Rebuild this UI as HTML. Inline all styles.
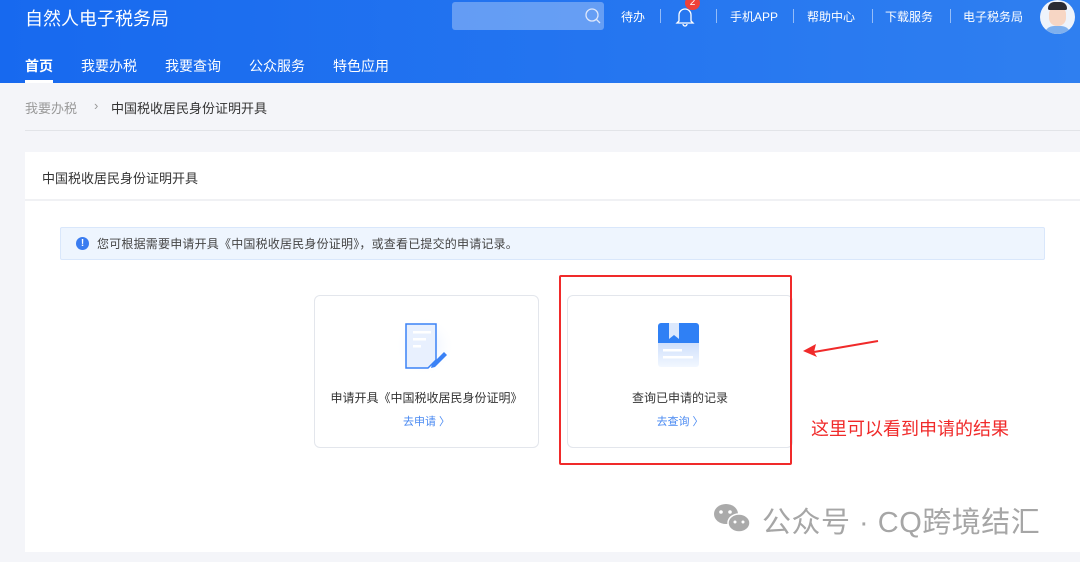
<!DOCTYPE html>
<html><head><meta charset="utf-8"><style>
*{margin:0;padding:0;box-sizing:border-box}
body{width:1080px;height:562px;overflow:hidden;background:#f4f5f9;font-family:"Liberation Sans","Noto Sans CJK SC",sans-serif;position:relative}
.abs{position:absolute}
.hdr{left:0;top:0;width:1080px;height:83px;background:linear-gradient(90deg,#1769ef,#2f7ff0)}
.t{color:#fff;white-space:nowrap}
.sep{width:1px;height:14px;background:rgba(255,255,255,.5);top:9px}
.card{background:#fff;border:1px solid #e3e6ec;border-radius:6px}
</style></head><body>
<div class="abs hdr"></div>
<div class="abs t" style="left:25px;top:5px;font-size:18px">自然人电子税务局</div>
<div class="abs" style="left:452px;top:2px;width:152px;height:28px;background:rgba(255,255,255,.3);border-radius:3px"></div>
<svg class="abs" style="left:584px;top:7px" width="18" height="18" viewBox="0 0 18 18"><circle cx="8" cy="8" r="6" fill="none" stroke="#dfe8fb" stroke-width="1.3"/><line x1="12.5" y1="12.5" x2="16" y2="16" stroke="#dfe8fb" stroke-width="1.3"/></svg>
<div class="abs t" style="left:621px;top:8px;font-size:12px">待办</div>
<div class="abs sep" style="left:660px"></div>
<svg class="abs" style="left:675px;top:5px" width="20" height="22" viewBox="0 0 20 22"><path d="M4 16V10a6 6 0 0 1 12 0v6l2 2H2z M8 19a2 2 0 0 0 4 0" fill="none" stroke="#fff" stroke-width="1.3"/></svg>
<div class="abs" style="left:685px;top:-4px;width:15px;height:14px;border-radius:7px;background:#f0413a;color:#fff;font-size:10px;text-align:center;line-height:14px">2</div>
<div class="abs sep" style="left:716px"></div>
<div class="abs t" style="left:730px;top:8px;font-size:12px">手机APP</div>
<div class="abs sep" style="left:793px"></div>
<div class="abs t" style="left:807px;top:8px;font-size:12px">帮助中心</div>
<div class="abs sep" style="left:872px"></div>
<div class="abs t" style="left:885px;top:8px;font-size:12px">下载服务</div>
<div class="abs sep" style="left:950px"></div>
<div class="abs t" style="left:963px;top:8px;font-size:12px">电子税务局</div>
<div class="abs" style="left:1040px;top:0;width:35px;height:34px;border-radius:50%;background:#eef3fb;overflow:hidden"><div style="position:absolute;left:9px;top:6px;width:17px;height:20px;border-radius:8px;background:#f7d6c4"></div><div style="position:absolute;left:8px;top:2px;width:19px;height:8px;border-radius:8px 8px 2px 2px;background:#2b2b33"></div><div style="position:absolute;left:4px;top:26px;width:27px;height:12px;border-radius:10px 10px 0 0;background:#7fb0ee"></div></div>
<div class="abs t" style="left:25px;top:56px;font-size:14px;font-weight:bold">首页</div>
<div class="abs" style="left:25px;top:80px;width:28px;height:3px;background:#fff"></div>
<div class="abs t" style="left:81px;top:56px;font-size:14px">我要办税</div>
<div class="abs t" style="left:165px;top:56px;font-size:14px">我要查询</div>
<div class="abs t" style="left:249px;top:56px;font-size:14px">公众服务</div>
<div class="abs t" style="left:333px;top:56px;font-size:14px">特色应用</div>
<div class="abs" style="left:25px;top:98px;font-size:13px;color:#999">我要办税</div>
<div class="abs" style="left:94px;top:98px;font-size:13px;color:#999">›</div>
<div class="abs" style="left:111px;top:98px;font-size:13px;color:#333">中国税收居民身份证明开具</div>
<div class="abs" style="left:25px;top:130px;width:1055px;height:1px;background:#e2e4e8"></div>
<div class="abs" style="left:25px;top:152px;width:1055px;height:400px;background:#fff"></div>
<div class="abs" style="left:25px;top:199px;width:1055px;height:2px;background:#f0f1f4"></div>
<div class="abs" style="left:42px;top:168px;font-size:13px;color:#333">中国税收居民身份证明开具</div>
<div class="abs" style="left:60px;top:227px;width:985px;height:33px;background:#eef5fe;border:1px solid #d9e7fb;border-radius:2px"></div>
<div class="abs" style="left:76px;top:237px;width:13px;height:13px;border-radius:50%;background:#3a7cf0;color:#fff;font-size:10px;font-weight:bold;text-align:center;line-height:13px">!</div>
<div class="abs" style="left:97px;top:235px;font-size:12px;color:#444;white-space:nowrap;letter-spacing:0.2px">您可根据需要申请开具《中国税收居民身份证明》，或查看已提交的申请记录。</div>
<div class="abs card" style="left:314px;top:295px;width:225px;height:153px"></div>
<div class="abs card" style="left:567px;top:295px;width:226px;height:153px"></div>
<svg class="abs" style="left:395px;top:316px" width="60" height="60" viewBox="0 0 60 60"><defs><radialGradient id="g" cx=".5" cy=".5" r=".5"><stop offset="0" stop-color="#dfeafe"/><stop offset="1" stop-color="#fff" stop-opacity="0"/></radialGradient></defs><circle cx="30" cy="30" r="30" fill="url(#g)"/><path d="M11 8h30v36l-8 8H11z" fill="#e8f0fe" stroke="#3b82f6" stroke-width="1.5"/><rect x="18" y="15" width="18" height="2.5" fill="#fff"/><rect x="18" y="22" width="13" height="2.5" fill="#fff"/><rect x="18" y="29" width="8" height="2.5" fill="#fff"/><path d="M37 48l12-12 3 3-12 12-4 1z" fill="#3b82f6"/></svg>
<svg class="abs" style="left:657px;top:322px" width="44" height="46" viewBox="0 0 44 46"><defs><linearGradient id="b" x1="0" y1="0" x2="0" y2="1"><stop offset=".45" stop-color="#2f80f5"/><stop offset=".46" stop-color="#cfe0fc"/><stop offset="1" stop-color="#f2f7ff"/></linearGradient></defs><rect x="1" y="1" width="41" height="44" rx="3" fill="url(#b)"/><path d="M12 1h10v16l-5-4-5 4z" fill="#dbe8fd"/><rect x="6" y="27" width="19" height="2.5" fill="#fff"/><rect x="6" y="34" width="30" height="2.5" fill="#fff"/></svg>
<div class="abs" style="left:314px;top:389px;width:225px;text-align:center;font-size:12px;color:#333;white-space:nowrap">申请开具《中国税收居民身份证明》</div>
<div class="abs" style="left:314px;top:413px;width:225px;text-align:center;font-size:11px;color:#4a8af2">去申请 〉</div>
<div class="abs" style="left:567px;top:389px;width:226px;text-align:center;font-size:12px;color:#333">查询已申请的记录</div>
<div class="abs" style="left:567px;top:413px;width:226px;text-align:center;font-size:11px;color:#4a8af2">去查询 〉</div>
<div class="abs" style="left:559px;top:275px;width:233px;height:190px;border:2px solid #f02a2a;border-radius:2px"></div>
<svg class="abs" style="left:800px;top:338px" width="80" height="22" viewBox="0 0 80 22"><path d="M78 3L14 14" stroke="#f02a2a" stroke-width="2"/><path d="M3 13l13-7-2 8 3 5z" fill="#f02a2a"/></svg>
<div class="abs" style="left:811px;top:415px;font-size:18px;color:#f02a2a;white-space:nowrap">这里可以看到申请的结果</div>
<svg class="abs" style="left:712px;top:502px" width="44" height="34" viewBox="0 0 44 34"><ellipse cx="14" cy="12" rx="12" ry="10" fill="#aaa"/><ellipse cx="27" cy="21" rx="11" ry="9" fill="#aaa" stroke="#fff" stroke-width="1.5"/><circle cx="9" cy="10" r="1.8" fill="#fff"/><circle cx="18" cy="10" r="1.8" fill="#fff"/><circle cx="23" cy="20" r="1.5" fill="#fff"/><circle cx="31" cy="20" r="1.5" fill="#fff"/></svg>
<div class="abs" style="left:762px;top:499px;font-size:29px;color:#a6a6a6;white-space:nowrap;letter-spacing:0.5px">公众号 · CQ跨境结汇</div>
</body></html>
